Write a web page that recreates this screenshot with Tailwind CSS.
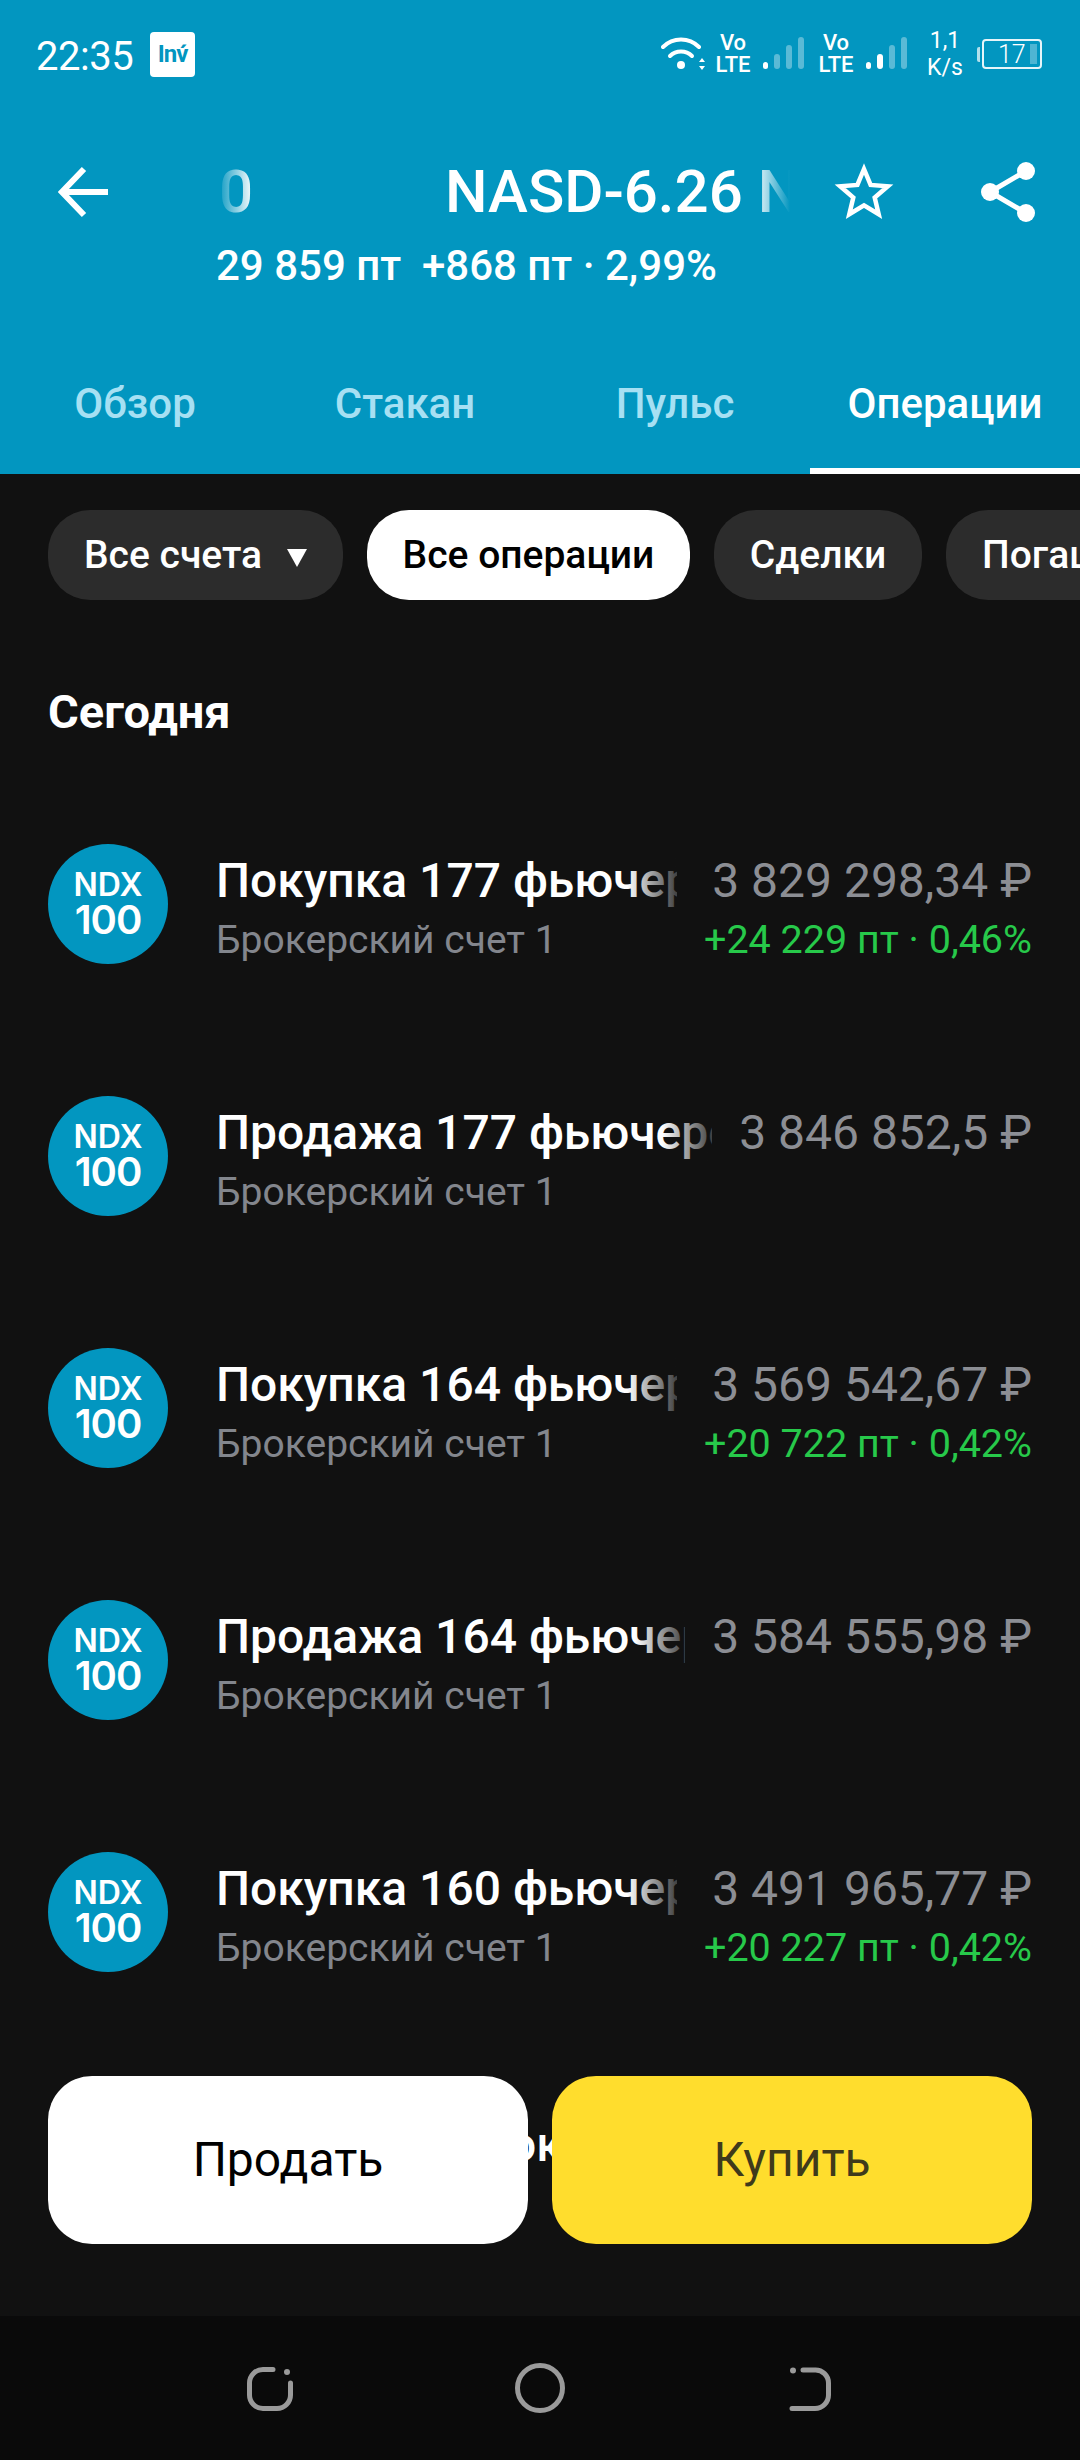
<!DOCTYPE html>
<html lang="en">
<head>
    <meta charset="UTF-8">
    <title>NASD-6.26</title>
    <script src="https://cdn.jsdelivr.net/npm/@tailwindcss/browser@4"></script>
</head>
<body class="bg-[#111111] font-['Roboto',sans-serif]">
<div class="relative w-[1080px] h-[2460px] overflow-hidden flex flex-col">

    <!-- header -->
    <div class="bg-[#0296c0] h-[474px] shrink-0 flex flex-col text-white">
        <!-- status bar -->
        <div class="h-[108px] shrink-0 pl-[36px] pr-[38px] flex items-center justify-between">
            <div class="flex items-center">
                <span class="w-[114px] mt-[5px] text-[40px] leading-none tracking-[-0.5px]">22:35</span>
                <span class="w-[45px] h-[45px] bg-white rounded-[4px] flex items-center justify-center text-[#0296c0] text-[24px] font-bold leading-none tracking-[-1px]">Inv&#769;</span>
            </div>
            <div class="flex items-center">
                <svg width="44" height="34" viewBox="0 0 44 34" fill="none" stroke="white" stroke-linecap="round">
                    <path d="M2 10 C12 0 28 0 38 10" stroke-width="4"/>
                    <path d="M9 19 C15 13 25 13 31 19" stroke-width="4"/>
                    <circle cx="20" cy="28" r="4" fill="white" stroke="none"/>
                    <path d="M41 21 l3 4 h-6 z M41 33 l3 -4 h-6 z" fill="white" stroke="none"/>
                </svg>
                <div class="flex flex-col items-center text-[22px] leading-[22px] font-medium ml-[8px] w-[40px]"><span>Vo</span><span>LTE</span></div>
                <svg width="42" height="34" viewBox="0 0 42 34" class="ml-[10px]" fill="white">
                    <rect x="0" y="25" width="5" height="7" rx="2.5"/>
                    <rect x="11" y="17" width="6" height="15" rx="3" opacity=".35"/>
                    <rect x="23" y="8" width="6" height="24" rx="3" opacity=".35"/>
                    <rect x="35" y="0" width="6" height="32" rx="3" opacity=".35"/>
                </svg>
                <div class="flex flex-col items-center text-[22px] leading-[22px] font-medium ml-[11px] w-[40px]"><span>Vo</span><span>LTE</span></div>
                <svg width="42" height="34" viewBox="0 0 42 34" class="ml-[10px]" fill="white">
                    <rect x="0" y="25" width="5" height="7" rx="2.5"/>
                    <rect x="11" y="17" width="6" height="15" rx="3"/>
                    <rect x="23" y="8" width="6" height="24" rx="3" opacity=".35"/>
                    <rect x="35" y="0" width="6" height="32" rx="3" opacity=".35"/>
                </svg>
                <div class="flex flex-col items-center text-[23px] leading-[27px] ml-[17px] w-[40px]"><span>1,1</span><span>K/s</span></div>
                <div class="w-[3px] h-[15px] bg-white/70 rounded-l-[2px] ml-[12px]"></div>
                <div class="relative w-[60px] h-[30px] ml-[2px] border-[2px] border-white/90 rounded-[4px] flex items-center pl-[14px] text-[25px] font-light leading-none">
                    17
                    <div class="absolute right-[3px] top-[3px] bottom-[3px] w-[7px] bg-white/30"></div>
                </div>
            </div>
        </div>

        <!-- title -->
        <div class="h-[104px] mt-[32px] shrink-0 flex items-center">
            <svg width="52" height="52" viewBox="0 0 52 52" class="ml-[58px] shrink-0" fill="none" stroke="white" stroke-width="6">
                <path d="M26 3 L4 26 L26 49 M4 26 H50"/>
            </svg>
            <div class="relative ml-[107px] w-[573px] h-[70px] overflow-hidden shrink-0">
                <div class="flex text-[60px] leading-[70px] font-medium whitespace-nowrap">
                    <span class="w-[228px] shrink-0 pl-[2px]">0</span><span>NASD-6.26 NDX</span>
                </div>
                <div class="absolute left-0 top-0 bottom-0 w-[36px] bg-gradient-to-r from-[#0296c0] to-transparent"></div>
                <div class="absolute right-0 top-0 bottom-0 w-[36px] bg-gradient-to-l from-[#0296c0] to-transparent"></div>
            </div>
            <svg width="58" height="58" viewBox="0 0 58 58" class="ml-[45px] shrink-0 overflow-visible" fill="none" stroke="white" stroke-width="4.5">
                <path d="M29 6 L35.6 21.9 L52.8 23.3 L39.7 34.5 L43.7 51.2 L29 42.3 L14.3 51.2 L18.3 34.5 L5.2 23.3 L22.4 21.9 Z"/>
            </svg>
            <svg width="54" height="60" viewBox="0 0 54 60" class="ml-[88px] shrink-0" fill="white" stroke="white" stroke-width="5">
                <circle cx="45" cy="9" r="9" stroke="none"/>
                <circle cx="9" cy="30" r="9" stroke="none"/>
                <circle cx="45" cy="51" r="9" stroke="none"/>
                <path d="M45 9 L9 30 L45 51" fill="none"/>
            </svg>
        </div>

        <div class="pl-[216px] mt-[-2px] text-[42px] leading-[48px] font-medium whitespace-pre">29 859 пт  +868 пт · 2,99%</div>

        <!-- tabs -->
        <div class="mt-auto grid grid-cols-4 h-[106px] text-[42px] font-medium leading-none text-[#a6e0f3]">
            <div class="flex justify-center pt-[15px]">Обзор</div>
            <div class="flex justify-center pt-[15px]">Стакан</div>
            <div class="flex justify-center pt-[15px]">Пульс</div>
            <div class="flex justify-center pt-[15px] text-white border-b-[6px] border-white">Операции</div>
        </div>
    </div>

    <!-- filter chips -->
    <div class="flex gap-[24px] pl-[48px] mt-[36px] h-[90px] shrink-0 text-[39px] font-medium text-white whitespace-nowrap">
        <div class="w-[295px] shrink-0 rounded-[42px] bg-[#2c2c2c] flex items-center pl-[36px]">
            Все счета
            <svg width="20" height="18" viewBox="0 0 20 18" class="ml-[25px] mt-[6px]" fill="white"><path d="M0 0 H20 L10 18 Z"/></svg>
        </div>
        <div class="w-[323px] shrink-0 rounded-[42px] bg-white text-black flex items-center justify-center">Все операции</div>
        <div class="w-[208px] shrink-0 rounded-[42px] bg-[#2c2c2c] flex items-center justify-center">Сделки</div>
        <div class="w-[300px] shrink-0 rounded-[42px] bg-[#2c2c2c] flex items-center pl-[36px]">Погашения</div>
    </div>

    <h2 class="pl-[48px] mt-[84px] text-[47px] leading-[56px] font-bold text-white">Сегодня</h2>

    <!-- operations -->
    <div id="ops" class="mt-[104px] flex flex-col">
        <div class="h-[252px] flex items-start pl-[48px] pr-[48px]">
            <div class="w-[120px] h-[120px] rounded-full bg-[#0296c0] text-white flex flex-col items-center justify-center shrink-0 font-['Inter',sans-serif] font-semibold">
                <span class="text-[32px] leading-[32px]">NDX</span>
                <span class="text-[40px] leading-[38px] tracking-[-1px]">100</span>
            </div>
            <div class="flex-1 min-w-0 ml-[48px] pt-[9px]">
                <div class="relative overflow-hidden whitespace-nowrap text-[48px] leading-[56px] font-medium text-white">Покупка 177 фьючерсов
                    <div class="absolute right-0 top-0 bottom-0 w-[50px] bg-gradient-to-l from-[#111111]/80 to-transparent"></div>
                </div>
                <div class="text-[39px] leading-[44px] text-[#83868d] mt-[9px]">Брокерский счет 1</div>
            </div>
            <div class="shrink-0 ml-[27px] pt-[9px] text-right">
                <div class="text-[48px] leading-[56px] text-[#8c8e94]">3 829 298,34 ₽</div>
                <div class="text-[39.5px] leading-[44px] mt-[9px] text-[#27c94a]">+24 229 пт · 0,46%</div>
            </div>
        </div>
        <div class="h-[252px] flex items-start pl-[48px] pr-[48px]">
            <div class="w-[120px] h-[120px] rounded-full bg-[#0296c0] text-white flex flex-col items-center justify-center shrink-0 font-['Inter',sans-serif] font-semibold">
                <span class="text-[32px] leading-[32px]">NDX</span>
                <span class="text-[40px] leading-[38px] tracking-[-1px]">100</span>
            </div>
            <div class="flex-1 min-w-0 ml-[48px] pt-[9px]">
                <div class="relative overflow-hidden whitespace-nowrap text-[48px] leading-[56px] font-medium text-white">Продажа 177 фьючерсов
                    <div class="absolute right-0 top-0 bottom-0 w-[50px] bg-gradient-to-l from-[#111111]/80 to-transparent"></div>
                </div>
                <div class="text-[39px] leading-[44px] text-[#83868d] mt-[9px]">Брокерский счет 1</div>
            </div>
            <div class="shrink-0 ml-[27px] pt-[9px] text-right">
                <div class="text-[48px] leading-[56px] text-[#8c8e94]">3 846 852,5 ₽</div>
            </div>
        </div>
        <div class="h-[252px] flex items-start pl-[48px] pr-[48px]">
            <div class="w-[120px] h-[120px] rounded-full bg-[#0296c0] text-white flex flex-col items-center justify-center shrink-0 font-['Inter',sans-serif] font-semibold">
                <span class="text-[32px] leading-[32px]">NDX</span>
                <span class="text-[40px] leading-[38px] tracking-[-1px]">100</span>
            </div>
            <div class="flex-1 min-w-0 ml-[48px] pt-[9px]">
                <div class="relative overflow-hidden whitespace-nowrap text-[48px] leading-[56px] font-medium text-white">Покупка 164 фьючерсов
                    <div class="absolute right-0 top-0 bottom-0 w-[50px] bg-gradient-to-l from-[#111111]/80 to-transparent"></div>
                </div>
                <div class="text-[39px] leading-[44px] text-[#83868d] mt-[9px]">Брокерский счет 1</div>
            </div>
            <div class="shrink-0 ml-[27px] pt-[9px] text-right">
                <div class="text-[48px] leading-[56px] text-[#8c8e94]">3 569 542,67 ₽</div>
                <div class="text-[39.5px] leading-[44px] mt-[9px] text-[#27c94a]">+20 722 пт · 0,42%</div>
            </div>
        </div>
        <div class="h-[252px] flex items-start pl-[48px] pr-[48px]">
            <div class="w-[120px] h-[120px] rounded-full bg-[#0296c0] text-white flex flex-col items-center justify-center shrink-0 font-['Inter',sans-serif] font-semibold">
                <span class="text-[32px] leading-[32px]">NDX</span>
                <span class="text-[40px] leading-[38px] tracking-[-1px]">100</span>
            </div>
            <div class="flex-1 min-w-0 ml-[48px] pt-[9px]">
                <div class="relative overflow-hidden whitespace-nowrap text-[48px] leading-[56px] font-medium text-white">Продажа 164 фьючерсов
                    <div class="absolute right-0 top-0 bottom-0 w-[50px] bg-gradient-to-l from-[#111111]/80 to-transparent"></div>
                </div>
                <div class="text-[39px] leading-[44px] text-[#83868d] mt-[9px]">Брокерский счет 1</div>
            </div>
            <div class="shrink-0 ml-[27px] pt-[9px] text-right">
                <div class="text-[48px] leading-[56px] text-[#8c8e94]">3 584 555,98 ₽</div>
            </div>
        </div>
        <div class="h-[252px] flex items-start pl-[48px] pr-[48px]">
            <div class="w-[120px] h-[120px] rounded-full bg-[#0296c0] text-white flex flex-col items-center justify-center shrink-0 font-['Inter',sans-serif] font-semibold">
                <span class="text-[32px] leading-[32px]">NDX</span>
                <span class="text-[40px] leading-[38px] tracking-[-1px]">100</span>
            </div>
            <div class="flex-1 min-w-0 ml-[48px] pt-[9px]">
                <div class="relative overflow-hidden whitespace-nowrap text-[48px] leading-[56px] font-medium text-white">Покупка 160 фьючерсов
                    <div class="absolute right-0 top-0 bottom-0 w-[50px] bg-gradient-to-l from-[#111111]/80 to-transparent"></div>
                </div>
                <div class="text-[39px] leading-[44px] text-[#83868d] mt-[9px]">Брокерский счет 1</div>
            </div>
            <div class="shrink-0 ml-[27px] pt-[9px] text-right">
                <div class="text-[48px] leading-[56px] text-[#8c8e94]">3 491 965,77 ₽</div>
                <div class="text-[39.5px] leading-[44px] mt-[9px] text-[#27c94a]">+20 227 пт · 0,42%</div>
            </div>
        </div>
    </div>

    <!-- row scrolled under the buttons -->
    <div class="absolute left-[509px] top-[2117px] text-[48px] leading-[56px] font-medium text-white">ок</div>

    <!-- buy / sell -->
    <div class="absolute left-[48px] right-[48px] top-[2076px] h-[168px] flex gap-[24px] text-[48px]">
        <div class="flex-1 bg-white text-black rounded-[44px] flex items-center justify-center">Продать</div>
        <div class="flex-1 bg-[#ffdd2d] text-[#3f3a1b] rounded-[44px] flex items-center justify-center">Купить</div>
    </div>

    <!-- android nav -->
    <div class="absolute left-0 right-0 bottom-0 h-[144px] bg-[#0a0a0a]">
        <svg width="46" height="44" viewBox="0 0 46 44" class="absolute left-[247px] top-[51px]" fill="none" stroke="#9a9a9a" stroke-width="5" stroke-linecap="round">
            <path d="M26 2.5 H16 A13.5 13.5 0 0 0 2.5 16 V28 A13.5 13.5 0 0 0 16 41.5 H30 A13.5 13.5 0 0 0 43.5 28 V16"/>
            <circle cx="40" cy="5" r="3" fill="#9a9a9a" stroke="none"/>
        </svg>
        <svg width="50" height="50" viewBox="0 0 50 50" class="absolute left-[515px] top-[47px]" fill="none" stroke="#9a9a9a" stroke-width="5">
            <circle cx="25" cy="25" r="22.5"/>
        </svg>
        <svg width="42" height="44" viewBox="0 0 42 44" class="absolute left-[789px] top-[51px]" fill="none" stroke="#9a9a9a" stroke-width="5" stroke-linecap="round">
            <path d="M14 3 H26 A13 13 0 0 1 39.5 16 V28 A13.5 13.5 0 0 1 26 41.5 H3"/>
            <circle cx="4" cy="3.5" r="3" fill="#9a9a9a" stroke="none"/>
        </svg>
    </div>
</div>
</body>
</html>
